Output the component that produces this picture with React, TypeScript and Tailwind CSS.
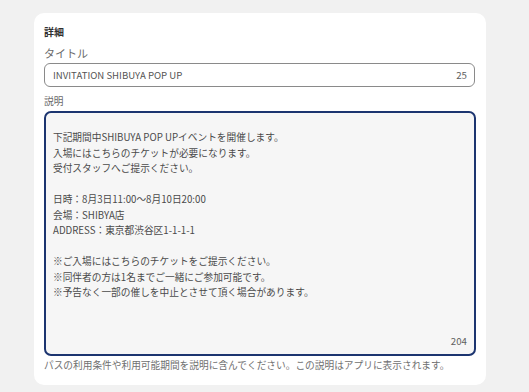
export default function App() {
  const body = `下記期間中SHIBUYA POP UPイベントを開催します。
入場にはこちらのチケットが必要になります。
受付スタッフへご提示ください。

日時：8月3日11:00〜8月10日20:00
会場：SHIBYA店
ADDRESS：東京都渋谷区1-1-1-1

※ご入場にはこちらのチケットをご提示ください。
※同伴者の方は1名までご一緒にご参加可能です。
※予告なく一部の催しを中止とさせて頂く場合があります。`;

  return (
    <div
      className="w-[529px] h-[392px] bg-[#f1f1f1] pt-[13px] pl-[34px]"
      style={{ fontFamily: '"Noto Sans CJK JP", "Noto Sans", sans-serif' }}
    >
      <section className="w-[452px] h-[372px] bg-white rounded-[10px] px-[10px] pt-[12px]">
        <h2 className="text-[10px] font-bold text-[#303030] leading-[14px]">詳細</h2>
        <label className="block mt-[7px] text-[11px] text-[#6a6a6a] leading-[14px]">
          タイトル
        </label>
        <div className="mt-[3px] h-[24px] w-[431px] rounded-[6px] border border-[#8a8a8a] flex items-center justify-between pl-[8px] pr-[7px] text-[9.6px] text-[#555]">
          <span>INVITATION SHIBUYA POP UP</span>
          <span className="text-[9.7px] text-[#616161]">25</span>
        </div>
        <label className="block mt-[7px] text-[9.7px] text-[#6a6a6a] leading-[14px]">
          説明
        </label>
        <div className="mt-[3px] h-[245px] w-[432px] rounded-[7px] border-2 border-[#1c3570] bg-[#f6f6f6] flex flex-col justify-between pl-[7px] pr-[7px] pt-[17px] pb-[6px] text-[9.7px] text-[#4a4a4a]">
          <p className="whitespace-pre-line leading-[15.5px]">{body}</p>
          <span className="self-end text-[#616161] leading-[14px]">204</span>
        </div>
        <p className="mt-[2px] text-[9.7px] text-[#707070] leading-[14px]">
          パスの利用条件や利用可能期間を説明に含んでください。この説明はアプリに表示されます。
        </p>
      </section>
    </div>
  );
}
